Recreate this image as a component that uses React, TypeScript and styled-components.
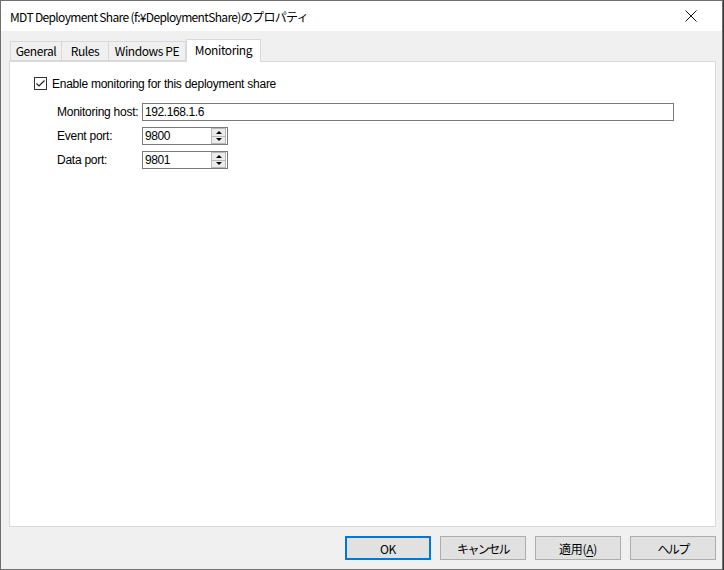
import styled, { createGlobalStyle } from 'styled-components'

const GlobalStyle = createGlobalStyle`
  html, body {
    margin: 0;
    padding: 0;
    background: #3a3a3a;
  }
  * { box-sizing: border-box; }
`

const uiFont = `"Noto Sans CJK JP", "Noto Sans", sans-serif`
const formFont = `"Liberation Sans", "Noto Sans CJK JP", sans-serif`

type TabDef = { label: string; width: number; active?: boolean }

const tabs: TabDef[] = [
  { label: 'General', width: 52 },
  { label: 'Rules', width: 47 },
  { label: 'Windows PE', width: 77 },
  { label: 'Monitoring', width: 75, active: true },
]

function Spinner() {
  return (
    <Spin>
      <SpinHalf><ArrowUp /></SpinHalf>
      <SpinHalf><ArrowDown /></SpinHalf>
    </Spin>
  )
}

export default function App() {
  return (
    <>
      <GlobalStyle />
      <Window>
        <TitleBar>
          <Title>MDT Deployment Share (f:¥DeploymentShare)のプロパティ</Title>
          <Close>
            <svg width="12" height="12" viewBox="0 0 12 12">
              <path d="M0.5 0.5 L11.5 11.5 M11.5 0.5 L0.5 11.5" stroke="#111" strokeWidth="1" />
            </svg>
          </Close>
        </TitleBar>
        <Body>
          <TabStrip>
            {tabs.map((t) => (
              <Tab key={t.label} $width={t.width} $active={t.active}>
                {t.label}
              </Tab>
            ))}
          </TabStrip>
          <Panel>
            <CheckRow>
              <CheckBox>
                <svg width="11" height="11" viewBox="0 0 11 11">
                  <path d="M1.5 5.5 L4 8 L9.5 2.5" stroke="#222" strokeWidth="1.2" fill="none" />
                </svg>
              </CheckBox>
              <Label>Enable monitoring for this deployment share</Label>
            </CheckRow>
            <Form>
              <FieldLabel>Monitoring host:</FieldLabel>
              <TextBox $wide>192.168.1.6</TextBox>
              <FieldLabel>Event port:</FieldLabel>
              <TextBox>
                9800
                <Spinner />
              </TextBox>
              <FieldLabel>Data port:</FieldLabel>
              <TextBox>
                9801
                <Spinner />
              </TextBox>
            </Form>
          </Panel>
          <ButtonRow>
            <Button $default>OK</Button>
            <Button $kana>キャンセル</Button>
            <Button>
              適用(<u>A</u>)
            </Button>
            <Button $kana>ヘルプ</Button>
          </ButtonRow>
        </Body>
      </Window>
    </>
  )
}

const Window = styled.div`
  width: 723px;
  height: 570px;
  border: 1px solid #6f6f6f;
  display: flex;
  flex-direction: column;
  background: #f0f0f0;
`

const TitleBar = styled.div`
  height: 30px;
  flex: none;
  background: #ffffff;
  display: flex;
  align-items: center;
  justify-content: space-between;
  padding: 0 0 0 9px;
`

const Title = styled.div`
  font-family: ${uiFont};
  font-size: 12px;
  letter-spacing: -0.65px;
  color: #000;
  padding-top: 1px;
`

const Close = styled.div`
  width: 46px;
  height: 30px;
  display: flex;
  align-items: center;
  justify-content: center;
  margin-right: 8px;
`

const Body = styled.div`
  flex: 1;
  display: flex;
  flex-direction: column;
  padding: 7px 6px 0 8px;
`

const TabStrip = styled.div`
  display: flex;
  align-items: flex-end;
  height: 23px;
  padding-left: 1px;
  position: relative;
  z-index: 1;
`

const Tab = styled.div<{ $width: number; $active?: boolean }>`
  width: ${(p) => p.$width}px;
  height: ${(p) => (p.$active ? 23 : 20)}px;
  margin-bottom: ${(p) => (p.$active ? -1 : 0)}px;
  background: ${(p) => (p.$active ? '#ffffff' : '#f0f0f0')};
  border: 1px solid #d9d9d9;
  border-bottom: ${(p) => (p.$active ? 'none' : '1px solid #d9d9d9')};
  border-left: ${(p) => (p.$active ? '1px solid #d9d9d9' : 'none')};
  &:first-child { border-left: 1px solid #d9d9d9; }
  font-family: ${uiFont};
  font-size: 12px;
  letter-spacing: -0.4px;
  color: #000;
  display: flex;
  align-items: center;
  justify-content: center;
  padding-bottom: ${(p) => (p.$active ? 3 : 1)}px;
`

const Panel = styled.div`
  height: 466px;
  background: #ffffff;
  border: 1px solid #d9d9d9;
  padding: 14px 0 0 24px;
`

const CheckRow = styled.div`
  display: flex;
  align-items: center;
  gap: 5px;
  height: 15px;
`

const CheckBox = styled.div`
  width: 13px;
  height: 13px;
  border: 1px solid #333;
  background: #fff;
  display: flex;
  align-items: center;
  justify-content: center;
`

const Label = styled.span`
  font-family: ${formFont};
  font-size: 12px;
  letter-spacing: -0.25px;
  color: #000;
`

const Form = styled.div`
  display: grid;
  grid-template-columns: 85px auto;
  row-gap: 6px;
  margin: 12px 0 0 23px;
  justify-items: start;
  align-items: center;
`

const FieldLabel = styled(Label)`
  line-height: 18px;
`

const TextBox = styled.div<{ $wide?: boolean }>`
  width: ${(p) => (p.$wide ? 532 : 86)}px;
  height: 18px;
  border: 1px solid #7a7a7a;
  background: #fff;
  font-family: ${formFont};
  font-size: 12px;
  letter-spacing: -0.4px;
  color: #000;
  padding: 0 0 0 2px;
  display: flex;
  align-items: center;
  justify-content: space-between;
`

const Spin = styled.div`
  width: 15px;
  height: 16px;
  display: flex;
  flex-direction: column;
  margin-right: 1px;
`

const SpinHalf = styled.div`
  flex: 1;
  background: #ececec;
  border: 1px solid #b8b8b8;
  &:first-child { border-bottom: none; }
  display: flex;
  align-items: center;
  justify-content: center;
`

const ArrowUp = styled.div`
  width: 0;
  height: 0;
  border-left: 3px solid transparent;
  border-right: 3px solid transparent;
  border-bottom: 3px solid #000;
`

const ArrowDown = styled.div`
  width: 0;
  height: 0;
  border-left: 3px solid transparent;
  border-right: 3px solid transparent;
  border-top: 3px solid #000;
`

const ButtonRow = styled.div`
  display: flex;
  justify-content: flex-end;
  gap: 9px;
  padding-top: 9px;
`

const Button = styled.div<{ $default?: boolean; $kana?: boolean }>`
  width: 86px;
  height: 24px;
  background: #e1e1e1;
  border: ${(p) => (p.$default ? '2px solid #0078d7' : '1px solid #adadad')};
  font-family: ${uiFont};
  font-size: 12px;
  letter-spacing: ${(p) => (p.$kana ? '-1.6px' : '-0.3px')};
  color: #000;
  display: flex;
  align-items: center;
  justify-content: center;
  u { text-underline-offset: 2px; }
`
